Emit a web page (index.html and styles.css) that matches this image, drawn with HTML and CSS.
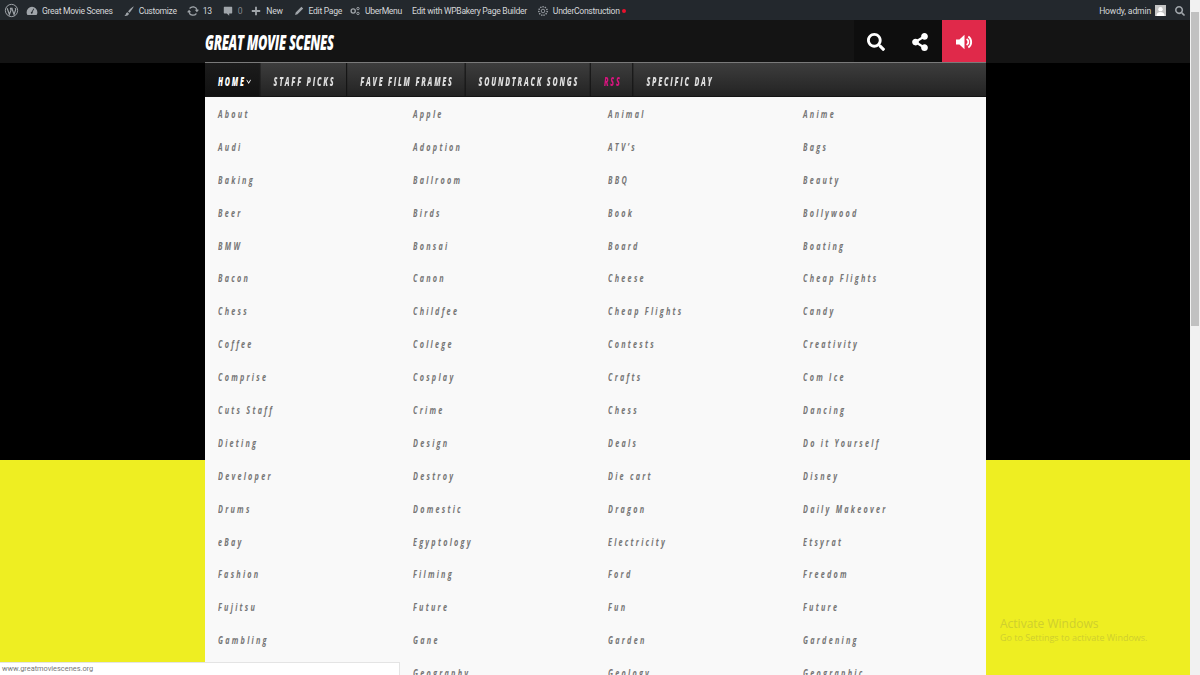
FILE: index.html
```html
<!DOCTYPE html>
<html>
    <head>
        <title>Great Movie Scenes</title>
        <link rel="stylesheet" href="styles.css">
    </head>
    <body>
        <div class="page">
            <!-- Admin bar -->
            <div class="adminbar">
                <div class="admin-left">
                    <svg class="wp-logo" viewBox="0 0 20 20"><circle cx="10" cy="10" r="8.2" fill="none" stroke="#a0a5aa" stroke-width="1.3"/><path d="M4.2 7l3 8.4 2.2-6-1-2.4M8 7h3.5M10.4 7l3 8.4 2-6c.5-1.5-.2-2.4-1-2.4" fill="none" stroke="#a0a5aa" stroke-width="1.5"/></svg>
                    <a class="admin-item"><svg class="icon" viewBox="0 0 20 20"><path d="M10 3a9 9 0 0 0-9 9c0 1.800.5 3.400 1.400 4.800h15.200A9 9 0 0 0 19 12a9 9 0 0 0-9-9zm.9 8.700a1.600 1.600 0 1 1-1.500-.6L12.600 6l.9.5z" fill="#a0a5aa"/></svg>Great Movie Scenes</a>
                    <a class="admin-item"><svg class="icon" viewBox="0 0 20 20"><path d="M18 2c-3 1.500-7.500 5.500-9.500 9l2.300 2C13.500 10 17 5 18 2zM7.500 12C5 12.500 5 15 4.500 16c-.4.800-1.500 1.500-2.500 2 3 .5 7 0 8-3.500z" fill="#a0a5aa"/></svg>Customize</a>
                    <a class="admin-item"><svg class="icon" viewBox="0 0 20 20"><path d="M10 4a6 6 0 0 1 5.700 4H13l3.500 4L20 8h-2.200A8 8 0 0 0 3.600 5.200L5 6.600A6 6 0 0 1 10 4zM10 16a6 6 0 0 1-5.700-4H7L3.500 8 0 12h2.200a8 8 0 0 0 14.200 2.800L15 13.400A6 6 0 0 1 10 16z" fill="#a0a5aa"/></svg>13</a>
                    <a class="admin-item muted"><svg class="icon" viewBox="0 0 20 20"><path d="M4 3h12a1 1 0 0 1 1 1v9a1 1 0 0 1-1 1h-4v4l-4-4H4a1 1 0 0 1-1-1V4a1 1 0 0 1 1-1z" fill="#a0a5aa"/></svg>0</a>
                    <a class="admin-item"><svg class="icon" viewBox="0 0 20 20"><path d="M8.500 3h3v5.500H17v3h-5.500V17h-3v-5.500H3v-3h5.500z" fill="#a0a5aa"/></svg>New</a>
                    <a class="admin-item tight"><svg class="icon" viewBox="0 0 20 20"><path d="M14 3l3 3-9.500 9.500-4 1 1-4zM12.800 5.500l1.700 1.700" fill="#a0a5aa"/></svg>Edit Page</a>
                    <a class="admin-item"><svg class="icon" viewBox="0 0 20 20"><g fill="none" stroke="#a0a5aa"><circle cx="7" cy="10" r="3.500" stroke-width="2.200"/><circle cx="15" cy="6" r="2" stroke-width="1.600"/><circle cx="15" cy="14" r="2" stroke-width="1.600"/></g></svg>UberMenu</a>
                    <a class="admin-item">Edit with WPBakery Page Builder</a>
                    <a class="admin-item"><svg class="icon gear" viewBox="0 0 20 20"><circle cx="10" cy="10" r="3" fill="none" stroke="#a0a5aa" stroke-width="1.400"/><circle cx="10" cy="10" r="7" fill="none" stroke="#a0a5aa" stroke-width="2.400" stroke-dasharray="2.200 1.700"/></svg>UnderConstruction<span class="red-dot"></span></a>
                </div>
                <div class="admin-right">
                    <span class="howdy">Howdy, admin</span>
                    <svg class="avatar" viewBox="0 0 12 12"><rect width="12" height="12" fill="#c4c4c4"/><circle cx="6" cy="4.500" r="2.400" fill="#fff"/><path d="M1.500 12c0-3 2-4.500 4.500-4.500s4.500 1.500 4.500 4.500z" fill="#fff"/></svg>
                    <svg class="admin-search" viewBox="0 0 512 512"><path d="M505 442.700L405.300 343c-4.500-4.500-10.600-7-17-7H372c27.600-35.300 44-79.700 44-128C416 93.100 322.900 0 208 0S0 93.100 0 208s93.100 208 208 208c48.300 0 92.700-16.400 128-44v16.300c0 6.400 2.500 12.500 7 17l99.700 99.700c9.400 9.400 24.600 9.400 33.900 0l28.300-28.300c9.400-9.400 9.400-24.600.1-34zM208 336c-70.700 0-128-57.200-128-128 0-70.700 57.200-128 128-128 70.700 0 128 57.200 128 128 0 70.700-57.200 128-128 128z" fill="#a0a5aa"/></svg>
                </div>
            </div>

            <!-- Site header -->
            <div class="site-header">
                <div class="wrap header-inner">
                    <div class="logo"><span>GREAT MOVIE SCENES</span></div>
                    <div class="header-icons">
                        <a class="head-btn"><svg class="head-icon" viewBox="0 0 512 512"><path d="M505 442.700L405.300 343c-4.500-4.500-10.600-7-17-7H372c27.600-35.300 44-79.700 44-128C416 93.100 322.900 0 208 0S0 93.100 0 208s93.100 208 208 208c48.300 0 92.700-16.400 128-44v16.300c0 6.400 2.500 12.500 7 17l99.700 99.700c9.400 9.400 24.600 9.400 33.900 0l28.300-28.300c9.400-9.400 9.400-24.600.1-34zM208 336c-70.700 0-128-57.200-128-128 0-70.700 57.200-128 128-128 70.700 0 128 57.200 128 128 0 70.700-57.200 128-128 128z" fill="#fff"/></svg></a>
                        <a class="head-btn"><svg class="head-icon" viewBox="0 0 448 512"><path d="M352 320c-22.608 0-43.387 7.819-59.790 20.895l-102.486-64.054a96.551 96.551 0 0 0 0-41.683l102.486-64.054C308.613 184.181 329.392 192 352 192c53.019 0 96-42.981 96-96S405.019 0 352 0s-96 42.981-96 96c0 7.158.79 14.130 2.276 20.841L155.790 180.895C139.387 167.819 118.608 160 96 160c-53.019 0-96 42.981-96 96s42.981 96 96 96c22.608 0 43.387-7.819 59.790-20.895l102.486 64.054A96.301 96.301 0 0 0 256 416c0 53.019 42.981 96 96 96s96-42.981 96-96-42.981-96-96-96z" fill="#fff"/></svg></a>
                        <a class="head-btn sound"><svg class="sound-icon" viewBox="0 0 20 18"><path d="M0 6h4l6-5.500v17L4 12H0z" fill="#fff"/><path d="M12.500 5.500a4 4 0 0 1 0 7M14.500 2.500a8 8 0 0 1 0 13" fill="none" stroke="#fff" stroke-width="2.200"/></svg></a>
                    </div>
                </div>
            </div>

            <!-- Black band with the nav, the menu hangs over both bands -->
            <div class="hero">
                <div class="wrap nav-holder">
                    <div class="nav">
                        <div class="nav-items">
                            <a class="nav-item current">HOME<svg class="chevron" viewBox="0 0 10 6"><path d="M1 1l4 4 4-4" fill="none" stroke="#fff" stroke-width="1.300"/></svg></a>
                            <a class="nav-item">STAFF PICKS</a>
                            <a class="nav-item">FAVE FILM FRAMES</a>
                            <a class="nav-item">SOUNDTRACK SONGS</a>
                            <a class="nav-item rss">RSS</a>
                            <a class="nav-item last">SPECIFIC DAY</a>
                        </div>
                    </div>
                    <div class="mega-menu">
                        <ul>
                            <li>About</li><li>Audi</li><li>Baking</li><li>Beer</li><li>BMW</li><li>Bacon</li>
                            <li>Chess</li><li>Coffee</li><li>Comprise</li><li>Cuts Staff</li><li>Dieting</li><li>Developer</li>
                            <li>Drums</li><li>eBay</li><li>Fashion</li><li>Fujitsu</li><li>Gambling</li>
                        </ul>
                        <ul>
                            <li>Apple</li><li>Adoption</li><li>Ballroom</li><li>Birds</li><li>Bonsai</li><li>Canon</li>
                            <li>Childfee</li><li>College</li><li>Cosplay</li><li>Crime</li><li>Design</li><li>Destroy</li>
                            <li>Domestic</li><li>Egyptology</li><li>Filming</li><li>Future</li><li>Gane</li><li>Geography</li>
                        </ul>
                        <ul>
                            <li>Animal</li><li>ATV’s</li><li>BBQ</li><li>Book</li><li>Board</li><li>Cheese</li>
                            <li>Cheap Flights</li><li>Contests</li><li>Crafts</li><li>Chess</li><li>Deals</li><li>Die cart</li>
                            <li>Dragon</li><li>Electricity</li><li>Ford</li><li>Fun</li><li>Garden</li><li>Geology</li>
                        </ul>
                        <ul>
                            <li>Anime</li><li>Bags</li><li>Beauty</li><li>Bollywood</li><li>Boating</li><li>Cheap Flights</li>
                            <li>Candy</li><li>Creativity</li><li>Com Ice</li><li>Dancing</li><li>Do it Yourself</li><li>Disney</li>
                            <li>Daily Makeover</li><li>Etsyrat</li><li>Freedom</li><li>Future</li><li>Gardening</li><li>Geographic</li>
                        </ul>
                    </div>
                </div>
            </div>
            <div class="yellow-band"></div>
        </div>

        <div class="scrollbar"><div class="scroll-thumb"></div></div>

        <!-- Things the OS and browser paint over the page -->
        <div class="status-bar">www.greatmoviescenes.org</div>
        <div class="activate">
            <div class="activate-title">Activate Windows</div>
            <div>Go to Settings to activate Windows.</div>
        </div>
    </body>
</html>
```

FILE: styles.css
```css
html, body {
    height: 100%;
}

body {
    margin: 0;
    display: flex;
    height: 675px;
    overflow: hidden;
    position: relative;
    font-family: "Open Sans", Arial, sans-serif;
    background: #000;
}

.page {
    flex: 1;
    display: flex;
    flex-direction: column;
    min-width: 0;
}

.wrap {
    width: 781px;
    margin-left: 205px;
}

/* Admin bar */
.adminbar {
    height: 20px;
    flex-shrink: 0;
    box-sizing: border-box;
    background: #23282d;
    color: #d5d7d9;
    font-family: Roboto, Arial, sans-serif;
    font-size: 8.6px;
    letter-spacing: -0.3px;
    display: flex;
    justify-content: space-between;
    align-items: center;
    padding: 1px 5px 0 4px;
}

.admin-left {
    display: flex;
    align-items: center;
}

.wp-logo {
    width: 15px;
    height: 15px;
    margin-right: 7px;
}

.admin-item {
    display: flex;
    align-items: center;
    margin-right: 10px;
    white-space: nowrap;
}

.admin-item.muted {
    color: #82878c;
    margin-right: 8px;
}

.admin-item.tight {
    margin-right: 7px;
}

.icon {
    width: 12px;
    height: 12px;
    margin-right: 4px;
}

.red-dot {
    width: 4px;
    height: 4px;
    margin-left: 2px;
    border-radius: 50%;
    background: #e8112d;
}

.admin-right {
    display: flex;
    align-items: center;
}

.howdy {
    letter-spacing: -0.15px;
}

.avatar {
    width: 11px;
    height: 11px;
    margin-left: 4px;
}

.admin-search {
    width: 10px;
    height: 10px;
    margin-left: 9px;
}

/* Site header */
.site-header {
    height: 43px;
    flex-shrink: 0;
    background: #141414;
}

.header-inner {
    height: 43px;
    display: flex;
    justify-content: space-between;
}

.logo {
    display: flex;
    align-items: center;
    color: #fff;
    font-family: "Open Sans", sans-serif;
    font-weight: 800;
    font-style: italic;
    font-size: 21px;
    letter-spacing: -0.5px;
    white-space: nowrap;
}

.logo span {
    display: inline-block;
    transform: scaleX(0.61);
    transform-origin: left center;
}

.header-icons {
    display: flex;
    background: #0e0e0e;
}

.head-btn {
    width: 44px;
    height: 43px;
    display: flex;
    align-items: center;
    justify-content: center;
}

.head-icon {
    height: 18px;
    width: 18px;
}

.head-btn.sound {
    background: #e0294a;
}

.sound-icon {
    width: 17px;
    height: 16px;
}

/* Black band and nav */
.hero {
    height: 397px;
    flex-shrink: 0;
    background: #000;
}

.nav-holder {
    position: relative;
    margin-top: -1px;
}

.nav {
    height: 35px;
    box-sizing: border-box;
    border-top: 1px solid #7a7a7a;
    border-bottom: 1px solid #141414;
    background: linear-gradient(#3d3d3d, #232323);
}

/* no condensed face installed, so the whole row is squeezed */
.nav-items {
    display: flex;
    width: 1323px;
    height: 33px;
    transform: scaleX(0.59);
    transform-origin: left center;
}

.nav-item {
    display: flex;
    align-items: center;
    padding: 3px 18px 0 22px;
    border-right: 2px solid #161616;
    color: #ddd;
    font-weight: 800;
    font-style: italic;
    font-size: 12px;
    letter-spacing: 3px;
    white-space: nowrap;
}

.nav-item.current {
    padding-right: 12px;
    color: #fff;
    background: linear-gradient(#1c1c1c, #111);
}

.nav-item.rss {
    color: #d6157e;
}

.nav-item.last {
    border-right: none;
}

.chevron {
    width: 12px;
    height: 5px;
    margin-left: -1px;
}

/* Dropdown */
.mega-menu {
    position: absolute;
    top: 35px;
    left: 0;
    width: 781px;
    display: flex;
    background: #f9f9f9;
}

.mega-menu ul {
    width: 195px;
    margin: 0;
    padding: 0;
    list-style: none;
}

.mega-menu li {
    height: 32.9px;
    line-height: 33px;
    padding-left: 13px;
    color: #767676;
    font-weight: 700;
    font-style: italic;
    font-size: 11px;
    letter-spacing: 3.4px;
    white-space: nowrap;
    transform: scaleX(0.66);
    transform-origin: 13px center;
}

.yellow-band {
    flex: 1;
    background: #eeee22;
}

/* Browser scrollbar */
.scrollbar {
    width: 10px;
    flex-shrink: 0;
    background: #f1f1f1;
    padding-top: 12px;
    box-sizing: border-box;
}

.scroll-thumb {
    height: 314px;
    margin: 0 1px;
    background: #c1c1c1;
}

/* Overlays */
.status-bar {
    position: absolute;
    left: 0;
    bottom: 0;
    width: 397px;
    height: 12px;
    padding-left: 2px;
    background: #fff;
    border-top: 1px solid #e4e4e4;
    border-right: 1px solid #e4e4e4;
    color: #777;
    font-family: Roboto, Arial, sans-serif;
    font-size: 7.4px;
    line-height: 12px;
}

.activate {
    position: absolute;
    left: 1000px;
    top: 616px;
    color: #cfcf2e;
    font-size: 9px;
    line-height: 13px;
}

.activate-title {
    font-size: 12px;
    line-height: 15px;
}
```
